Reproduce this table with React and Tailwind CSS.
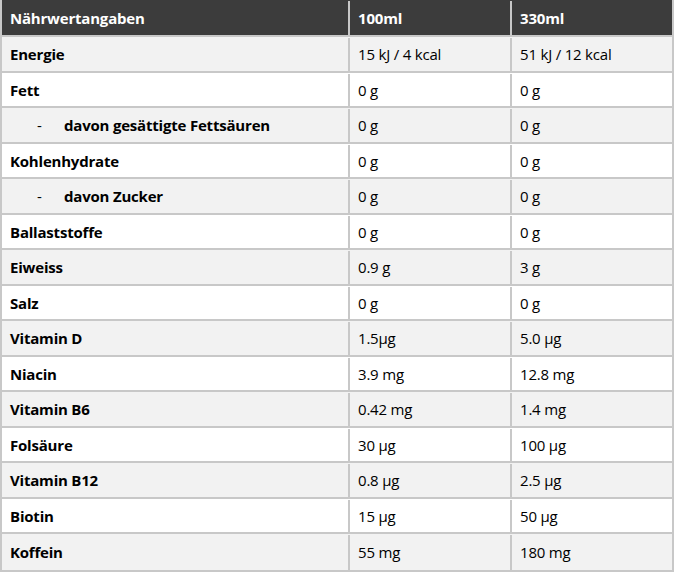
import React from 'react';

const rows = [
  { name: 'Energie', a: '15 kJ / 4 kcal', b: '51 kJ / 12 kcal' },
  { name: 'Fett', a: '0 g', b: '0 g' },
  { name: 'davon gesättigte Fettsäuren', a: '0 g', b: '0 g', sub: true },
  { name: 'Kohlenhydrate', a: '0 g', b: '0 g' },
  { name: 'davon Zucker', a: '0 g', b: '0 g', sub: true },
  { name: 'Ballaststoffe', a: '0 g', b: '0 g' },
  { name: 'Eiweiss', a: '0.9 g', b: '3 g' },
  { name: 'Salz', a: '0 g', b: '0 g' },
  { name: 'Vitamin D', a: '1.5µg', b: '5.0 µg' },
  { name: 'Niacin', a: '3.9 mg', b: '12.8 mg' },
  { name: 'Vitamin B6', a: '0.42 mg', b: '1.4 mg' },
  { name: 'Folsäure', a: '30 µg', b: '100 µg' },
  { name: 'Vitamin B12', a: '0.8 µg', b: '2.5 µg' },
  { name: 'Biotin', a: '15 µg', b: '50 µg' },
  { name: 'Koffein', a: '55 mg', b: '180 mg' },
];

const App = () => {
  return (
    <div className="w-[675px] h-[573px] bg-white text-[15px] tracking-[-0.2px] text-black font-['Open_Sans',sans-serif]">
      <div className="w-[674px] border-l-2 border-r-2 border-b-2 border-[#c8c8c8]">
        <div className="flex h-[37px] pt-px bg-[#3c3c3c] text-white font-bold border-b-2 border-[#c8c8c8]">
          <div className="w-[346px] flex items-center pl-2">Nährwertangaben</div>
          <div className="w-[162px] flex items-center pl-2 border-l-2 border-[#c8c8c8]">100ml</div>
          <div className="flex-1 flex items-center pl-2 border-l-2 border-[#c8c8c8]">330ml</div>
        </div>
        {rows.map((row, i) => (
          <div
            key={row.name}
            className={
              (i % 2 === 0 ? 'bg-[#f2f2f2] ' : 'bg-white ') +
              'flex h-[35.5px] pt-px ' +
              (i < rows.length - 1 ? 'border-b-2 border-[#c8c8c8]' : '')
            }
          >
            <div className="w-[346px] flex items-center pl-2 font-bold">
              {row.sub && <span className="w-[54px] pl-[27px] font-normal">-</span>}
              {row.name}
            </div>
            <div className="w-[162px] flex items-center pl-2 border-l-2 border-[#c8c8c8]">{row.a}</div>
            <div className="flex-1 flex items-center pl-2 border-l-2 border-[#c8c8c8]">{row.b}</div>
          </div>
        ))}
      </div>
    </div>
  );
};

export default App;
